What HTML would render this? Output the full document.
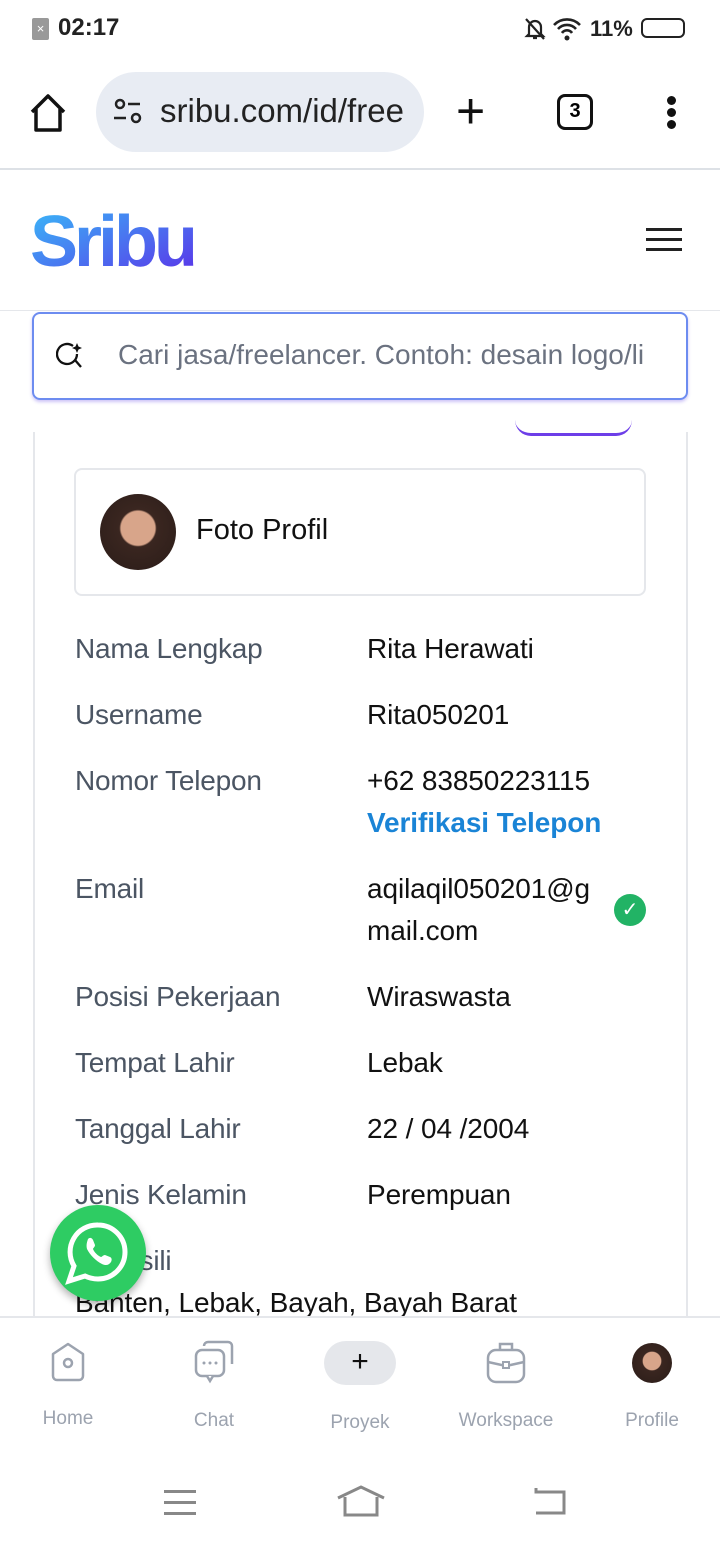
<!DOCTYPE html>
<html><head><meta charset="utf-8"><style>
*{margin:0;padding:0;box-sizing:border-box}
body{width:720px;height:1544px;background:#fff;font-family:"Liberation Sans",sans-serif;position:relative;overflow:hidden}
.abs{position:absolute}
.lbl{position:absolute;left:75px;font-size:28px;color:#4b5563;letter-spacing:-0.2px}
.val{position:absolute;left:367px;font-size:28px;color:#111;letter-spacing:-0.1px}
.nav{position:absolute;top:1408px;font-size:19px;color:#9ca3af;text-align:center;width:120px}
</style></head><body>
<div class="abs" style="left:32px;top:18px;width:17px;height:22px;background:#999;border-radius:2px;color:#fff;font-size:13px;text-align:center;line-height:22px">×</div>
<div class="abs" style="left:58px;top:14px;font-size:24px;font-weight:bold;color:#222">02:17</div>
<svg class="abs" style="left:522px;top:16px" width="26" height="26" viewBox="0 0 26 26"><path d="M7 18V11a6 6 0 0 1 12 0v7l2 2H5zM11 22h4M4 3l18 20" stroke="#222" stroke-width="2.2" fill="none"/></svg>
<svg class="abs" style="left:552px;top:16px" width="30" height="26" viewBox="0 0 30 26"><path d="M2 9a18 18 0 0 1 26 0M6 13a12 12 0 0 1 18 0M10 17a6 6 0 0 1 10 0" stroke="#222" stroke-width="2.6" fill="none"/><circle cx="15" cy="22" r="2.5" fill="#222"/></svg>
<div class="abs" style="left:590px;top:16px;font-size:22px;font-weight:bold;color:#222">11%</div>
<div class="abs" style="left:641px;top:18px;width:44px;height:20px;border:2.5px solid #222;border-radius:6px"></div>
<svg class="abs" style="left:28px;top:92px" width="40" height="42" viewBox="0 0 40 42"><path d="M4 20L20 4l16 16M8 17v21h24V17" stroke="#111" stroke-width="3.5" fill="none" stroke-linejoin="round"/></svg>
<div class="abs" style="left:96px;top:72px;width:328px;height:80px;background:#e8ecf3;border-radius:40px"></div>
<svg class="abs" style="left:112px;top:98px" width="32" height="28" viewBox="0 0 32 28"><circle cx="8" cy="6" r="4" stroke="#222" stroke-width="2.5" fill="none"/><path d="M16 6h12M2 20h12" stroke="#222" stroke-width="2.5"/><circle cx="24" cy="20" r="4" stroke="#222" stroke-width="2.5" fill="none"/></svg>
<div class="abs" style="left:160px;top:92px;font-size:33px;color:#222;width:250px;overflow:hidden;white-space:nowrap">sribu.com/id/free</div>
<div class="abs" style="left:456px;top:82px;font-size:50px;color:#111;font-weight:300">+</div>
<div class="abs" style="left:557px;top:94px;width:36px;height:36px;border:3.5px solid #111;border-radius:8px;font-size:20px;font-weight:bold;text-align:center;line-height:29px">3</div>
<div class="abs" style="left:667px;top:96px;width:9px;height:9px;background:#111;border-radius:50%"></div>
<div class="abs" style="left:667px;top:108px;width:9px;height:9px;background:#111;border-radius:50%"></div>
<div class="abs" style="left:667px;top:120px;width:9px;height:9px;background:#111;border-radius:50%"></div>
<div class="abs" style="left:0;top:168px;width:720px;height:2px;background:#dde1e6"></div>
<svg class="abs" style="left:30px;top:205px" width="170" height="70"><defs><linearGradient id="g" x1="0" y1="0" x2="1" y2="1"><stop offset="0" stop-color="#38bdf8"/><stop offset="1" stop-color="#5b2ee8"/></linearGradient></defs><text x="0" y="61" font-family="Liberation Sans" font-weight="bold" font-size="72" fill="url(#g)" letter-spacing="-4">Sribu</text></svg>
<div class="abs" style="left:646px;top:228px;width:36px;height:3px;background:#222"></div>
<div class="abs" style="left:646px;top:238px;width:36px;height:3px;background:#222"></div>
<div class="abs" style="left:646px;top:248px;width:36px;height:3px;background:#222"></div>
<div class="abs" style="left:0;top:310px;width:720px;height:1px;background:#e5e7eb"></div>
<div class="abs" style="left:32px;top:312px;width:656px;height:88px;border:2px solid #6d8cf0;border-radius:8px;box-shadow:0 2px 3px rgba(90,60,230,.3)"></div>
<svg class="abs" style="left:56px;top:340px" width="30" height="32" viewBox="0 0 30 32"><path d="M17 6a10 10 0 1 0 4 8M19 20l6 7" stroke="#111" stroke-width="2.3" fill="none"/><path d="M21 3l1.5 3.5L26 8l-3.5 1.5L21 13l-1.5-3.5L16 8l3.5-1.5z" fill="#111"/></svg>
<div class="abs" style="left:118px;top:339px;font-size:28px;color:#6b7280;white-space:nowrap;width:566px;overflow:hidden">Cari jasa/freelancer. Contoh: desain logo/li</div>
<div class="abs" style="left:33px;top:432px;width:655px;height:900px;border-left:2px solid #e5e7eb;border-right:2px solid #e5e7eb"></div>
<div class="abs" style="left:515px;top:420px;width:117px;height:16px;border-bottom:3px solid #6d3ee8;border-radius:0 0 20px 20px"></div>
<div class="abs" style="left:74px;top:468px;width:572px;height:128px;border:2px solid #e5e7eb;border-radius:8px"></div>
<div class="abs" style="left:100px;top:494px;width:76px;height:76px;border-radius:50%;background:radial-gradient(circle at 50% 45%,#d8a58a 0 30%,#3a2620 33%,#2a1c18 100%)"></div>
<div class="abs" style="left:196px;top:514px;font-size:29px;color:#111;font-weight:500">Foto Profil</div>
<div class="lbl" style="top:633px">Nama Lengkap</div><div class="val" style="top:633px">Rita Herawati</div>
<div class="lbl" style="top:699px">Username</div><div class="val" style="top:699px">Rita050201</div>
<div class="lbl" style="top:765px">Nomor Telepon</div><div class="val" style="top:765px">+62 83850223115</div>
<div class="val" style="top:807px;color:#1a84d6;font-weight:bold">Verifikasi Telepon</div>
<div class="lbl" style="top:873px">Email</div><div class="val" style="line-height:42px;top:868px">aqilaqil050201@g<br>mail.com</div>
<div class="abs" style="left:614px;top:894px;width:32px;height:32px;border-radius:50%;background:#22b365;color:#fff;text-align:center;font-size:20px;line-height:32px">✓</div>
<div class="lbl" style="top:981px">Posisi Pekerjaan</div><div class="val" style="top:981px">Wiraswasta</div>
<div class="lbl" style="top:1047px">Tempat Lahir</div><div class="val" style="top:1047px">Lebak</div>
<div class="lbl" style="top:1113px">Tanggal Lahir</div><div class="val" style="top:1113px">22 / 04 /2004</div>
<div class="lbl" style="top:1179px">Jenis Kelamin</div><div class="val" style="top:1179px">Perempuan</div>
<div class="lbl" style="top:1245px">Domisili</div>
<div class="val" style="left:75px;top:1287px">Banten, Lebak, Bayah, Bayah Barat</div>
<div class="abs" style="left:50px;top:1205px;width:96px;height:96px;border-radius:50%;background:#2ecc63;box-shadow:0 4px 8px rgba(0,0,0,.3)"></div>
<svg class="abs" style="left:64px;top:1219px" width="68" height="68" viewBox="0 0 68 68"><path d="M34 6a27 27 0 0 1 0 54c-5 0-9-1-13-3L5 62l5-15A27 27 0 0 1 34 6z" stroke="#fff" stroke-width="5" fill="none"/><path d="M24 20c2-2 4-1 5 1l2 5c0 2-2 3-2 4 1 3 5 7 8 8 1 0 2-2 4-2l5 2c2 1 2 3 1 5-2 3-5 4-9 2-6-3-12-9-15-15-1-4 0-7 1-10z" fill="#fff"/></svg>
<div class="abs" style="left:0;top:1316px;width:720px;height:228px;background:#fff;border-top:2px solid #e5e7eb"></div>
<svg class="abs" style="left:48px;top:1340px" width="40" height="44" viewBox="0 0 40 44"><path d="M20 4L35 14v22a4 4 0 0 1-4 4H9a4 4 0 0 1-4-4V14z" stroke="#9ca3af" stroke-width="2.5" fill="none" stroke-linejoin="round"/><circle cx="20" cy="23" r="4" stroke="#9ca3af" stroke-width="2.5" fill="none"/></svg>
<svg class="abs" style="left:192px;top:1340px" width="44" height="44" viewBox="0 0 44 44"><rect x="4" y="10" width="28" height="26" rx="6" stroke="#9ca3af" stroke-width="2.5" fill="none"/><path d="M12 6a4 4 0 0 1 4-4h20a4 4 0 0 1 4 4v18" stroke="#9ca3af" stroke-width="2.5" fill="none"/><path d="M15 36l3 5 3-5" stroke="#9ca3af" stroke-width="2.5" fill="#fff"/><circle cx="12" cy="23" r="1.5" fill="#9ca3af"/><circle cx="18" cy="23" r="1.5" fill="#9ca3af"/><circle cx="24" cy="23" r="1.5" fill="#9ca3af"/></svg>
<div class="abs" style="left:324px;top:1341px;width:72px;height:44px;border-radius:22px;background:#e5e7eb;text-align:center;font-size:30px;line-height:42px;color:#111">+</div>
<svg class="abs" style="left:484px;top:1340px" width="44" height="46" viewBox="0 0 44 46"><rect x="4" y="10" width="36" height="32" rx="8" stroke="#9ca3af" stroke-width="2.5" fill="none"/><path d="M16 10V4h12v6M4 22l18 4 18-4" stroke="#9ca3af" stroke-width="2.5" fill="none"/><rect x="19" y="22" width="6" height="6" stroke="#9ca3af" stroke-width="2" fill="#fff"/></svg>
<div class="abs" style="left:632px;top:1343px;width:40px;height:40px;border-radius:50%;background:radial-gradient(circle at 50% 45%,#d8a58a 0 30%,#3a2620 33%,#2a1c18 100%)"></div>
<div class="nav" style="left:8px">Home</div>
<div class="nav" style="left:154px;top:1410px">Chat</div>
<div class="nav" style="left:300px;top:1412px">Proyek</div>
<div class="nav" style="left:446px;top:1410px">Workspace</div>
<div class="nav" style="left:592px;top:1410px">Profile</div>
<div class="abs" style="left:164px;top:1490px;width:32px;height:3px;background:#888"></div>
<div class="abs" style="left:164px;top:1501px;width:32px;height:3px;background:#888"></div>
<div class="abs" style="left:164px;top:1512px;width:32px;height:3px;background:#888"></div>
<svg class="abs" style="left:336px;top:1484px" width="50" height="34" viewBox="0 0 50 34"><path d="M2 14L25 3l23 11M9 13v18h32V13" stroke="#888" stroke-width="3" fill="none"/></svg>
<svg class="abs" style="left:530px;top:1486px" width="38" height="30" viewBox="0 0 38 30"><path d="M6 2v4h28v21H6" stroke="#888" stroke-width="3" fill="none"/></svg>
</body></html>
